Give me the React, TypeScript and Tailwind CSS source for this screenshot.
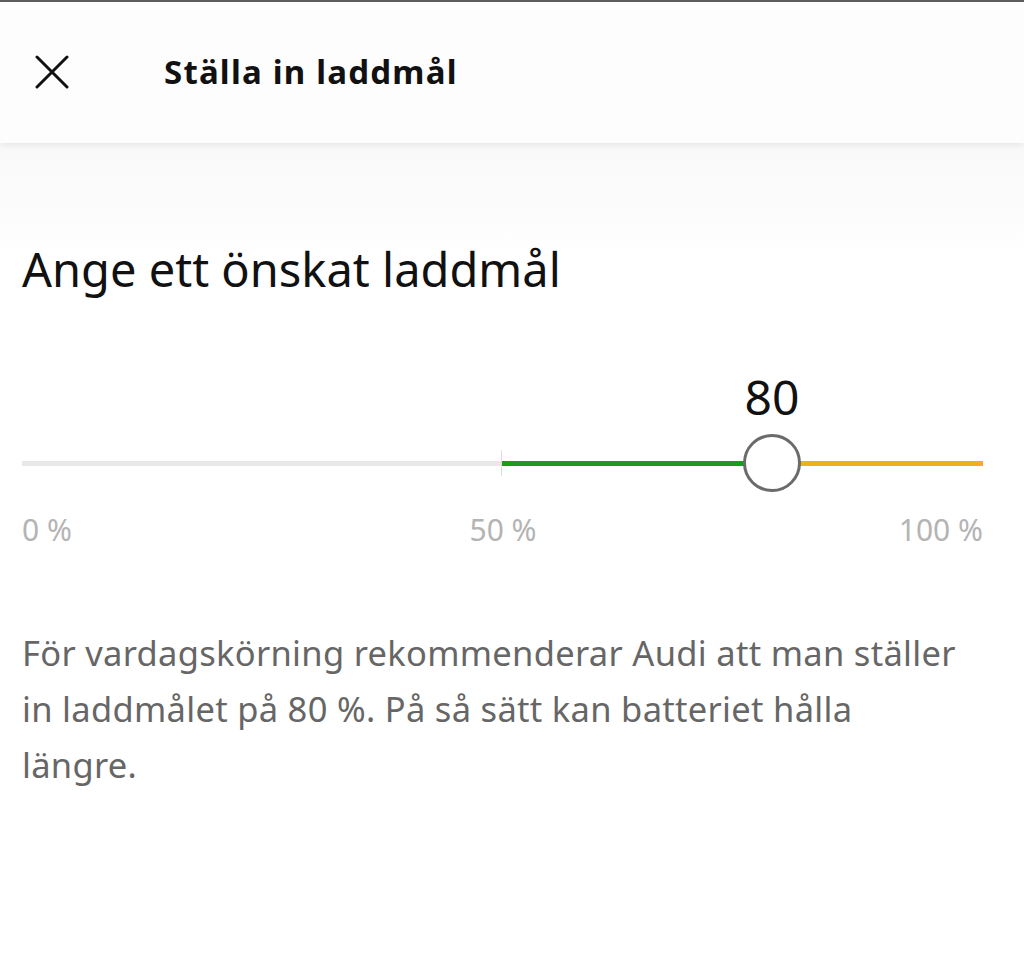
import React from "react";

export default function App() {
  const font = { fontFamily: '"Noto Sans", "Open Sans", sans-serif' };
  return (
    <div className="w-[1024px] h-[975px] bg-white overflow-hidden flex flex-col" style={font}>
      <div className="h-[2px] bg-[#5f5f5f]" />
      <header className="relative z-10 h-[141px] bg-[#fdfdfd] flex items-center shadow-[0_2px_6px_rgba(0,0,0,0.08)]">
        <div className="w-[164px] flex items-center pl-[34px]">
          <svg width="36" height="36" viewBox="0 0 36 36" fill="none">
            <path d="M3 2 L33 32 M33 2 L3 32" stroke="#111" strokeWidth="3" strokeLinecap="round" />
          </svg>
        </div>
        <h1 className="text-[33px] font-bold text-[#111] tracking-[1.2px] leading-none pb-[2px]">Ställa in laddmål</h1>
      </header>
      <main className="flex-1 flex flex-col px-[22px] bg-gradient-to-b from-[#f8f8f8] to-white to-[14%]">
        <h2 className="mt-[98px] text-[47px] leading-[56px] text-[#111] font-normal">Ange ett önskat laddmål</h2>
        <div className="relative mt-[117px] mr-[19px] h-[70px]">
          <div className="absolute left-[716px] top-[-41px] w-[68px] text-center text-[48px] leading-none text-[#111]">80</div>
          <div className="absolute left-0 right-0 top-[47px] h-[5px] flex">
            <div className="w-[479px] h-full bg-[#e8e8e8]" />
            <div className="w-[1px] h-full bg-[#dcdcdc]" />
            <div className="w-[270px] h-full bg-[#1c9a1c]" />
            <div className="flex-1 h-full bg-[#f3ad1f]" />
          </div>
          <div className="absolute left-[479px] top-[36px] w-[1px] h-[26px] bg-[#dedede]" />
          <div className="absolute left-[721px] top-[20px] w-[58px] h-[58px] rounded-full bg-white border-[3px] border-[#6b6b6b]" />
        </div>
        <div className="relative mt-[26px] mr-[19px] h-[40px] text-[30px] text-[#b4b4b4] leading-[40px]">
          <span className="absolute left-0">0 %</span>
          <span className="absolute left-[481px] -translate-x-1/2">50 %</span>
          <span className="absolute right-0">100 %</span>
        </div>
        <p className="mt-[75px] text-[34.5px] tracking-[0.3px] leading-[56px] text-[#666] max-w-[940px]">
          För vardagskörning rekommenderar Audi att man ställer in laddmålet på 80 %. På så sätt kan batteriet hålla längre.
        </p>
      </main>
    </div>
  );
}
